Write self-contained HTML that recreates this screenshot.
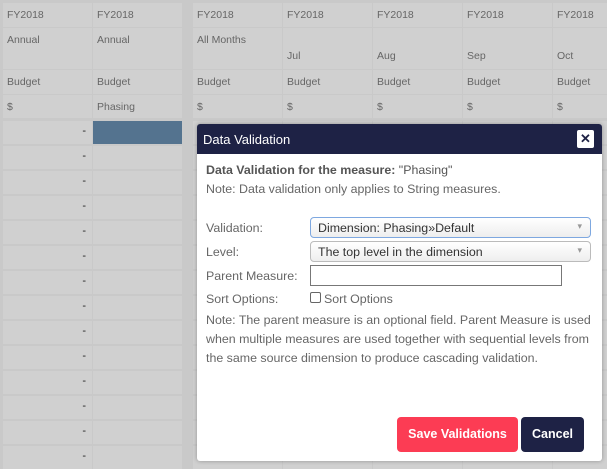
<!DOCTYPE html>
<html><head><style>
*{margin:0;padding:0;box-sizing:border-box}
body{width:607px;height:466px;overflow:hidden;background:#c9c9c9;font-family:"Liberation Sans",sans-serif;position:relative}
.c{position:absolute;background:#d0d0d0;color:#666;font-size:10.5px;padding:6px 4px}
.d{position:absolute;background:#d0d0d0;color:#222;font-size:11px;text-align:right;padding:4px 6px 0 0}
.m{position:absolute;left:197px;top:124px;width:405px;height:337px;background:#fff;border-radius:3px;overflow:hidden;box-shadow:0 0 4px rgba(0,0,0,.3)}
.h{height:30px;background:#1e2245;color:#fff;font-size:13px;padding:8px 6px}
.x{position:absolute;left:380px;top:6px;width:17px;height:18px;background:#fff;border-radius:2px;color:#1e2245;font-weight:bold;font-size:13px;text-align:center;line-height:18px}
.b{color:#666;font-size:12.4px;position:absolute}
.sel{position:absolute;left:113px;width:281px;height:21px;border:1px solid #bbb;border-radius:4px;background:linear-gradient(#fff,#eee);font-size:12.4px;color:#333;padding:3px 7px}
.sel:after{content:"▾";position:absolute;right:8px;top:3px;color:#999;font-size:9px}
.btn{position:absolute;top:293px;height:35px;border-radius:4px;color:#fff;font-weight:bold;font-size:12.5px;text-align:center;line-height:35px}
</style></head><body>
<div id="g"></div>
<script>
var h='';var cols=[[3,89],[93,89],[193,89],[283,89],[373,89],[463,89],[553,60]];
var rows=[[3,24,0],[28,41,1],[70,24,2],[95,23,3]];
var tx=[["FY2018","Annual","Budget","$"],["FY2018","Annual","Budget","Phasing"],["FY2018","All Months","Budget","$"],["FY2018","Jul","Budget","$"],["FY2018","Aug","Budget","$"],["FY2018","Sep","Budget","$"],["FY2018","Oct","Budget","$"]];
cols.forEach(function(c,i){rows.forEach(function(r,j){var t=tx[i][j];var pad=(j==1&&i>2)?'padding-top:22px;':'';h+='<div class="c" style="left:'+c[0]+'px;top:'+r[0]+'px;width:'+c[1]+'px;height:'+r[1]+'px;'+pad+'">'+t+'</div>';});
for(var y=121;y<466;y+=25){var bg=(i==1&&y==121)?'background:#54738f;':'';h+='<div class="d" style="left:'+c[0]+'px;top:'+y+'px;width:'+c[1]+'px;height:23px;'+bg+'">'+(i==0?'-':'')+'</div>';}});
document.getElementById('g').innerHTML=h;
</script>
<div class="m">
<div class="h">Data Validation</div><div class="x">✕</div>
<div class="b" style="left:9px;top:39px;color:#555"><b>Data Validation for the measure:</b> "Phasing"</div>
<div class="b" style="left:9px;top:58px">Note: Data validation only applies to String measures.</div>
<div class="b" style="left:9px;top:97px">Validation:</div>
<div class="sel" style="top:93px;border-color:#7ea8e0">Dimension: Phasing»Default</div>
<div class="b" style="left:9px;top:121px">Level:</div>
<div class="sel" style="top:117px">The top level in the dimension</div>
<div class="b" style="left:9px;top:145px">Parent Measure:</div>
<div style="position:absolute;left:113px;top:141px;width:252px;height:21px;border:1px solid #777"></div>
<div class="b" style="left:9px;top:168px">Sort Options:</div>
<div style="position:absolute;left:113px;top:168px;width:11px;height:11px;border:1px solid #666;border-radius:2px"></div>
<div class="b" style="left:127px;top:168px">Sort Options</div>
<div class="b" style="left:9px;top:187px;line-height:19px;width:392px">Note: The parent measure is an optional field. Parent Measure is used when multiple measures are used together with sequential levels from the same source dimension to produce cascading validation.</div>
<div class="btn" style="left:200px;width:121px;background:#fc3c54">Save Validations</div>
<div class="btn" style="left:324px;width:63px;background:#1e2245">Cancel</div>
</div>
</body></html>
